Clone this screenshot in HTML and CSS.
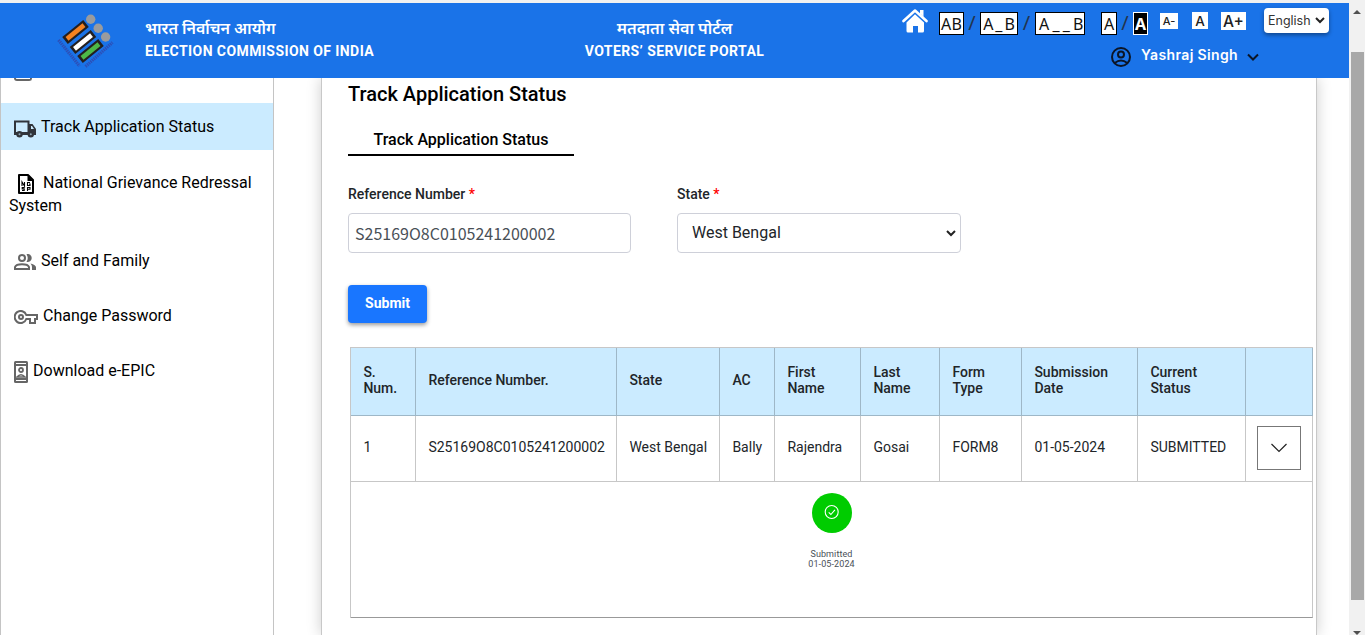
FILE: index.html
```html
<!DOCTYPE html>
<html lang="en">
<head>
<meta charset="utf-8">
<title>Voters' Service Portal</title>
<link rel="stylesheet" href="styles.css">
</head>
<body>
<div class="window">
  <div class="viewport">
    <header class="header">
      <div class="brand">
        <svg class="logo" width="60" height="56" viewBox="0 0 60 56">
          <g fill="#999b9e"><circle cx="34.700" cy="6.300" r="4.700"/><circle cx="42.200" cy="15.200" r="4.700"/><circle cx="49.600" cy="24" r="4.700"/></g>
          <g stroke="#231f20" stroke-width="8.800" fill="none">
            <path d="M9 27.500 30 10.500"/><path d="M16.500 37.500 37.500 20.500"/><path d="M24 46.500 45 29.500"/>
          </g>
          <g fill="none" stroke-width="4.600">
            <path d="M11 25.900 28 12.100" stroke="#f58220"/>
            <path d="M18.500 35.900 35.500 22.100" stroke="#fff"/>
            <path d="M26 44.900 43 31.100" stroke="#4db848"/>
          </g>
          <g fill="none" stroke="#2c50b8" stroke-width="3.200" stroke-dasharray="1.500 .7"><path d="m2.500 27 21 26M29.500 53.500l27-24"/></g>
        </svg>
        <div class="title"><span class="hindi">भारत निर्वाचन आयोग</span><span class="english">ELECTION COMMISSION OF INDIA</span></div>
      </div>
      <div class="title title-center"><span class="hindi hindi-portal">मतदाता सेवा पोर्टल</span><span class="english english-portal">VOTERS’ SERVICE PORTAL</span></div>
      <div class="tools">
        <div class="tools-row">
          <svg class="home" width="26" height="26" viewBox="0 0 26 26"><path d="M1.500 13 13 2.500 24.500 13" fill="none" stroke="#fff" stroke-width="2.600" stroke-linecap="round" stroke-linejoin="round"/><path d="M18 2h3.500v7L18 5.500z" fill="#fff"/><path d="M13 6.300 22 14.500V23q0 1.500-1.500 1.500H16V18h-5v6.500H6Q4.500 24.500 4.500 23v-8.500z" fill="#fff"/></svg>
          <span class="box ab1">AB</span><span class="slash">/</span><span class="box ab2">A_B</span><span class="slash wide">/</span><span class="box ab3">A__B</span>
          <span class="box contrast-light">A</span><span class="slash">/</span><span class="box contrast-dark">A</span>
          <span class="size size-down">A-</span><span class="size size-base">A</span><span class="size size-up">A+</span>
          <span class="language">English<svg width="10" height="7" viewBox="0 0 10 7"><path d="m1 1 4 4 4-4" fill="none" stroke="#222" stroke-width="2"/></svg></span>
        </div>
        <div class="user">
          <svg width="22" height="22" viewBox="0 0 22 22" fill="none" stroke="#0b1526" stroke-width="2"><circle cx="11" cy="11" r="9"/><circle cx="11" cy="8.500" r="3"/><path d="M4.700 17q6.300-5 12.600 0"/></svg>
          <span class="user-name">Yashraj Singh</span>
          <svg width="12" height="8" viewBox="0 0 12 8"><path d="m1 1.500 5 5 5-5" fill="none" stroke="#0b1526" stroke-width="2"/></svg>
        </div>
      </div>
    </header>
    <div class="body">
      <nav class="sidebar">
        <div class="cut-item"></div>
        <a class="item active"><svg class="ico" width="22" height="18" viewBox="0 0 22 18"><path d="M1 1.500h13.500V14H1z" fill="none" stroke="#30343b" stroke-width="2"/><path d="M14.500 4h4l3.500 5v6h-7.500zM1 12h14v3H1z" fill="#30343b"/><path d="M17 6h1l2 3h-3z" fill="#cbebff"/><circle cx="5.500" cy="14.200" r="3.200" fill="#30343b"/><circle cx="16.800" cy="14.200" r="3.200" fill="#30343b"/><circle cx="5.500" cy="14.200" r="1" fill="#8fa5b3"/><circle cx="16.800" cy="14.200" r="1" fill="#8fa5b3"/></svg><span>Track Application Status</span></a>
        <a class="item grievance"><svg class="ico" width="16" height="20" viewBox="0 0 16 20"><path d="M1 1h9l5 5v13H1z" fill="#fff" stroke="#000" stroke-width="2" stroke-linejoin="round"/><path d="M9.500 1v6H15z"/><path d="M4 12V8l2.500 4V8M12 8.500H9.500v3H12V10h-1M6.500 13.500H4.200v1.400h2v1.600H4M9.500 17v-3.500H12v1.800H9.500" fill="none" stroke="#000" stroke-width="1.100"/></svg><span>National Grievance Redressal System</span></a>
        <a class="item family"><svg class="ico" width="22" height="16" viewBox="0 0 22 16"><circle cx="8" cy="4" r="3" fill="none" stroke="#666" stroke-width="2"/><path d="M1 15v-2q1-2.800 7-2.800t7 2.800v2z" fill="none" stroke="#666" stroke-width="2"/><path d="M12.500.2a4 4 0 1 1 0 7.600q2.500-3.800 0-7.600M16.500 9.500Q22 10.800 22 13.500V16h-4v-3q0-2-1.500-3.500" fill="#666"/></svg><span>Self and Family</span></a>
        <a class="item password"><svg class="ico" width="24" height="14" viewBox="0 0 24 14"><path d="M12.300 5a6 6 0 1 0 0 4H16v4h5V9h2V5z" fill="none" stroke="#666" stroke-width="2"/><circle cx="7" cy="7" r="2" fill="none" stroke="#666" stroke-width="2"/></svg><span>Change Password</span></a>
        <a class="item epic"><svg class="ico" width="14" height="22" viewBox="0 0 14 22"><rect width="14" height="22" rx="1.500" fill="#666"/><path d="M2 2.500h10M2 19.500h10" stroke="#fff"/><path d="M2 5h10v12H2z" fill="#fff"/><circle cx="7" cy="9" r="2" fill="none" stroke="#666" stroke-width="1.800"/><path d="M3 16q4-4.500 8 0z" fill="#fff" stroke="#666" stroke-width="1.600"/></svg><span>Download e-EPIC</span></a>
      </nav>
      <div class="content">
        <main class="card">
          <h1>Track Application Status</h1>
          <div class="tab">Track Application Status</div>
          <div class="form">
            <div class="field"><label>Reference Number <b>*</b></label><div class="control reference">S25169O8C0105241200002</div></div>
            <div class="field"><label>State <b>*</b></label><div class="control state">West Bengal<svg width="10" height="7" viewBox="0 0 10 7"><path d="m1 1 4 4 4-4" fill="none" stroke="#222" stroke-width="2"/></svg></div></div>
          </div>
          <button class="submit">Submit</button>
          <table class="status">
            <colgroup><col class="c1"><col class="c2"><col class="c3"><col class="c4"><col class="c5"><col class="c6"><col class="c7"><col class="c8"><col class="c9"><col class="c10"></colgroup>
            <thead><tr><th>S. Num.</th><th>Reference Number.</th><th>State</th><th>AC</th><th>First Name</th><th>Last Name</th><th>Form Type</th><th>Submission Date</th><th>Current Status</th><th></th></tr></thead>
            <tbody>
              <tr class="record"><td>1</td><td>S25169O8C0105241200002</td><td>West Bengal</td><td>Bally</td><td>Rajendra</td><td>Gosai</td><td>FORM8</td><td>01-05-2024</td><td>SUBMITTED</td><td class="toggle-cell"><span class="toggle"><svg width="16" height="10" viewBox="0 0 16 10"><path d="m.5 1 7.500 7.500L15.500 1" fill="none" stroke="#222" stroke-width="1.200"/></svg></span></td></tr>
              <tr class="detail"><td colspan="10"><div class="step"><span class="dot"><svg width="16" height="16" viewBox="0 0 16 16" fill="none" stroke="#fff" stroke-width="1.100"><circle cx="7.700" cy="8" r="6.500"/><path d="m4.700 8.300 2.200 2.200 4-4.700"/></svg></span><span class="step-label">Submitted<br>01-05-2024</span></div></td></tr>
            </tbody>
          </table>
        </main>
      </div>
    </div>
  </div>
  <div class="scrollbar"><span class="arrow-up"></span><span class="thumb"></span><span class="arrow-down"></span></div>
</div>
</body>
</html>
```
FILE: styles.css
```css
* { box-sizing: border-box; }
body { margin: 0; font-family: Roboto, "Noto Sans Devanagari", sans-serif; color: #000; background: #fff; overflow: hidden; }
svg { display: block; flex: none; }
.window { display: flex; width: 1365px; height: 635px; border-top: 3px solid #f1f1f1; }
.viewport { width: 1349px; display: flex; flex-direction: column; overflow: hidden; }

.header { height: 75px; flex: none; background: #1a73e8; display: grid; grid-template-columns: 1fr auto 1fr; color: #fff; }
.brand { display: flex; padding: 10px 0 0 56px; }
.logo { margin-right: 29px; }
.title { display: flex; flex-direction: column; white-space: nowrap; font-weight: 700; }
.brand .title { padding-top: 5px; }
.title-center { padding-top: 15px; align-items: center; }
.hindi { font-size: 16px; line-height: 22px; height: 22px; font-weight: 600; }
.hindi-portal { font-size: 16.2px; }
.english { font-size: 14px; line-height: 22px; letter-spacing: .42px; }
.tools { width: 429px; justify-self: end; margin-left: -8px; }
.tools-row { height: 38px; display: flex; align-items: flex-start; padding-top: 5px; }
.home { margin: 0 11px 0 -18px; }
.box { border: 1px solid #000; background: #fff; color: #111; height: 23px; margin-top: 4px; font: 16px/23px "Noto Sans", sans-serif; text-align: center; flex: none; white-space: nowrap; }
.ab1 { width: 25px; letter-spacing: .2px; }
.ab2 { width: 38px; letter-spacing: 2px; padding-left: 2px; }
.ab3 { width: 50px; letter-spacing: 3.2px; padding-left: 3px; }
.contrast-light { width: 16px; margin-left: 16px; }
.contrast-dark { width: 15px; background: #000; color: #fff; border-color: #fff; font-weight: 700; }
.slash { width: 16px; flex: none; text-align: center; color: #22344f; font: 20px/30px "Noto Sans", sans-serif; }
.wide { width: 17px; }
.size { background: #fff; color: #222; text-align: center; font-family: Inter, sans-serif; font-weight: 500; flex: none; }
.size-down { width: 18px; height: 16px; margin: 5px 14px 0 12px; font-size: 11px; line-height: 17px; }
.size-base { width: 16px; height: 17px; margin: 4px 13px 0 0; font-size: 13.5px; line-height: 18px; }
.size-up { width: 25px; height: 18px; margin: 4px 18px 0 0; font-size: 15.5px; line-height: 20px; }
.language { width: 65px; height: 25px; flex: none; background: #fff; color: #333; border-radius: 4px; box-shadow: 0 2px 4px #0006; display: flex; align-items: center; justify-content: space-between; padding: 0 4px; font: 12.5px Inter, sans-serif; }
.user { display: flex; align-items: center; padding: 5px 0 0 190px; }
.user-name { font: 600 14px/22px Inter, sans-serif; letter-spacing: .36px; margin: -4px 9px 0; white-space: nowrap; }

.body { flex: 1; min-height: 0; display: flex; }
.sidebar { width: 274px; flex: none; border: solid #c4c4c4; border-width: 0 1px; }
.cut-item { width: 18px; height: 3px; margin: 0 0 22px 13px; border: 2px solid #666; border-top: 0; border-radius: 0 0 3px 3px; }
.item { display: block; font-size: 16px; line-height: 23px; padding-left: 13px; height: 55px; }
.ico { display: inline-block; vertical-align: middle; }
.active { background: #cbebff; height: 47px; padding-top: 12px; }
.active .ico { margin: 2px 5px 0 0; }
.grievance { padding: 21px 8px 0; height: 99px; }
.grievance .ico { margin: 1px 9px 0; }
.family .ico { margin: 1px 5px 0 0; }
.password .ico { margin: 1px 5px 0 0; }
.epic .ico { margin: 1px 5px 0 0; }

.content { flex: 1; padding: 0 32px 0 47px; }
.card { height: 557px; border: solid #c8c8c8; border-width: 0 1px; box-shadow: 0 0 14px #0003; padding: 4px 0 0 26px; clip-path: inset(0 -32px); }
h1 { margin: 0; font-size: 20px; line-height: 24px; font-weight: 500; }
.tab { width: 226px; height: 34px; margin-top: 16px; border-bottom: 2px solid #000; font-size: 16px; line-height: 36px; font-weight: 500; text-align: center; }
.form { display: flex; gap: 46px; margin-top: 30px; }
label { display: block; font-size: 14px; line-height: 16px; font-weight: 500; color: #212529; }
label b { color: #f00; font-weight: 500; }
.control { height: 40px; margin-top: 11px; border: 1px solid #ced0d9; border-radius: 4px; display: flex; align-items: center; }
.reference { width: 283px; padding: 0 6px; color: #495057; font-family: "Noto Sans CJK SC", sans-serif; font-size: 16px; }
.state { width: 284px; padding: 0 4px 2px 14px; justify-content: space-between; font-size: 16px; color: #212529; }
.state svg { margin-top: 2px; }
.submit { display: block; width: 79px; height: 38px; margin: 32px 0 24px; border: 0; border-radius: 4px; background: #1976ff; color: #fff; font: 700 14px Roboto, sans-serif; box-shadow: 0 2px 4px #0006; padding: 0 0 2px; }
.status { margin-left: 2px; width: 963px; table-layout: fixed; border-spacing: 0; border: solid #00000038; border-width: 1px 0 0 1px; font-size: 14px; line-height: 16px; color: #212529; }
.status th, .status td { border: solid #00000038; border-width: 0 1px 1px 0; padding: 0 8px 3px 12.4px; text-align: left; font-weight: 400; vertical-align: middle; white-space: nowrap; }
.status th { height: 68px; background: #cbebff; font-weight: 500; white-space: normal; }
.status .record td { height: 66px; }
.c1 { width: 65px; } .c2 { width: 201px; } .c3 { width: 103px; } .c4 { width: 55px; } .c5 { width: 86px; }
.c6 { width: 79px; } .c7 { width: 82px; } .c8 { width: 116px; } .c9 { width: 108px; } .c10 { width: 67px; }
.status .toggle-cell { padding: 0 0 2px 11px; }
.toggle { display: flex; width: 44px; height: 44px; border: 1px solid #777; align-items: center; justify-content: center; }
.status .detail td { height: 136px; vertical-align: top; padding: 11px 0 0; border-bottom-color: #999; }
.step { display: flex; flex-direction: column; align-items: center; }
.dot { width: 40px; height: 40px; border-radius: 50%; background: #0c0; display: flex; align-items: center; justify-content: center; padding-bottom: 2px; }
.step-label { font-size: 9px; line-height: 10px; color: #495057; text-align: center; margin-top: 16px; letter-spacing: .1px; }

.scrollbar { width: 16px; background: #f1f1f1; display: flex; flex-direction: column; align-items: center; padding: 7px 0 0; }
.arrow-up { border: solid transparent; border-width: 0 4px 4px; border-bottom-color: #505050; margin-bottom: 38px; }
.thumb { width: 13px; height: 548px; background: #a8a8a8; margin-left: 1px; }
.arrow-down { border: solid transparent; border-width: 4px 4px 0; border-top-color: #505050; margin-top: 31px; }
```
